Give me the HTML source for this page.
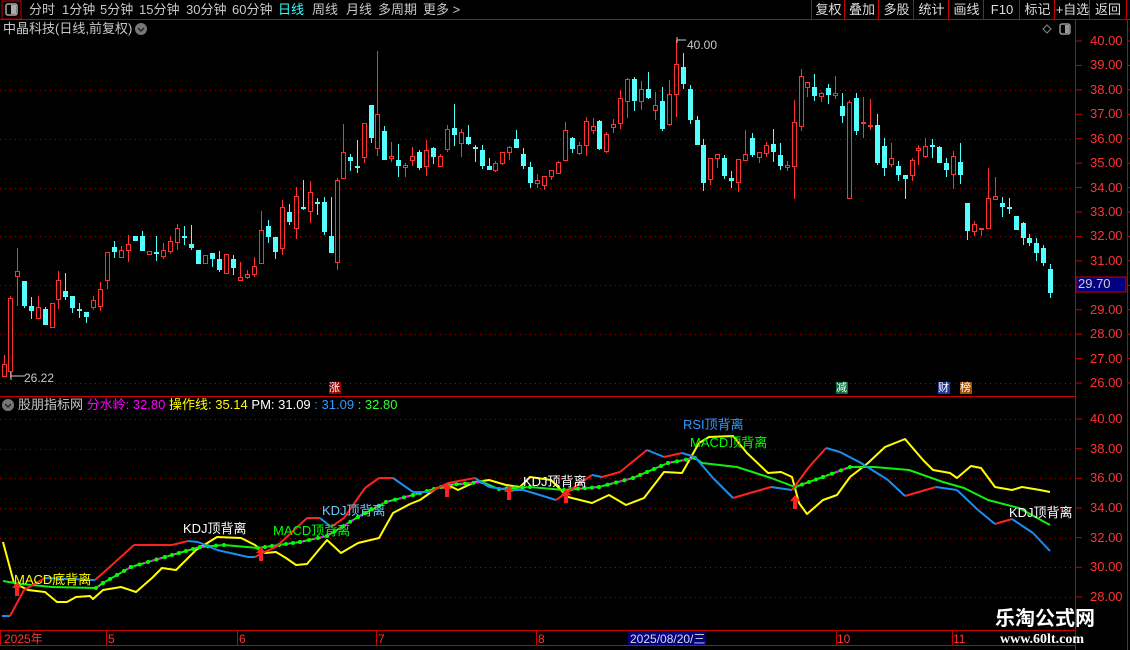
<!DOCTYPE html>
<html><head><meta charset="utf-8"><style>
*{margin:0;padding:0}
body{width:1130px;height:650px;background:#000;overflow:hidden;position:relative;font-family:"Liberation Sans","Noto Sans CJK SC",sans-serif;font-size:12px;color:#c8c8c8}
.t{position:absolute;white-space:nowrap;line-height:14px}
.m{position:absolute;top:3px;font-size:13px;line-height:14px;white-space:nowrap;color:#c8c8c8}
.btn{position:absolute;top:0;height:19px;border-left:1px solid #c00;color:#ddd;font-size:13px;line-height:19px;text-align:center}
svg{position:absolute;left:0;top:0}
</style></head><body>
<svg id="s" width="1130" height="650" xmlns="http://www.w3.org/2000/svg">
<rect x="2" y="1" width="19" height="18" fill="none" stroke="#c00"/>
<rect x="6" y="4" width="11" height="11" rx="2" fill="none" stroke="#aaa" stroke-width="1.5"/><rect x="11" y="5" width="5" height="9" fill="#aaa"/>
<line x1="0" y1="19.5" x2="1130" y2="19.5" stroke="#c00"/>
<line x1="0" y1="396.5" x2="1075" y2="396.5" stroke="#c00"/>
<line x1="0" y1="630.5" x2="1075" y2="630.5" stroke="#c00"/>
<line x1="0" y1="645.5" x2="1075" y2="645.5" stroke="#c00"/>
<line x1="1075.5" y1="20" x2="1075.5" y2="650" stroke="#c00"/>
<line x1="1127.5" y1="20" x2="1127.5" y2="650" stroke="#c00"/>
<g id="grid" stroke="#a00" stroke-dasharray="1,4"></g>
<g id="ax" stroke="#c00"></g>
<g id="cd"></g>
<g id="ln" fill="none" stroke-width="2" stroke-linejoin="round"></g>
<circle cx="141" cy="29" r="6" fill="#777"/><path d="M138 28l3 3 3-3" stroke="#222" stroke-width="1.5" fill="none"/>
<circle cx="8" cy="405" r="6" fill="#777"/><path d="M5 404l3 3 3-3" stroke="#222" stroke-width="1.5" fill="none"/>
<path d="M1047 25l4 4-4 4-4-4z" fill="none" stroke="#888"/>
<rect x="1060" y="24" width="10" height="10" rx="2" fill="none" stroke="#999" stroke-width="1.5"/><rect x="1065" y="25" width="4" height="8" fill="#999"/>
<rect x="1076" y="277" width="50" height="15" fill="#000080" stroke="#c00"/>
<rect x="628" y="631" width="78" height="14" fill="#000080"/>
<rect x="329" y="382" width="12" height="12" fill="#900"/>
<rect x="836" y="382" width="12" height="12" fill="#0a6a3a"/>
<rect x="938" y="382" width="12" height="12" fill="#1a3aa0"/>
<rect x="960" y="382" width="12" height="12" fill="#a05000"/>
<path d="M11 372v8M11 376h14" stroke="#ccc"/>
<path d="M677 37v6M677 40h9" stroke="#ccc"/>
</svg>
<div class="m" style="left:29px">分时</div><div class="m" style="left:62px">1分钟</div><div class="m" style="left:100px">5分钟</div><div class="m" style="left:139px">15分钟</div><div class="m" style="left:186px">30分钟</div><div class="m" style="left:232px">60分钟</div><div class="m" style="left:278px;color:#3ff">日线</div><div class="m" style="left:312px">周线</div><div class="m" style="left:346px">月线</div><div class="m" style="left:378px">多周期</div><div class="m" style="left:423px">更多 &gt;</div>
<div class="btn" style="left:811px;width:33px">复权</div><div class="btn" style="left:844px;width:34px">叠加</div><div class="btn" style="left:878px;width:35px">多股</div><div class="btn" style="left:913px;width:35px">统计</div><div class="btn" style="left:948px;width:35px">画线</div><div class="btn" style="left:983px;width:36px">F10</div><div class="btn" style="left:1019px;width:35px">标记</div><div class="btn" style="left:1054px;width:35px">+自选</div><div class="btn" style="left:1089px;width:36px;border-right:1px solid #c00">返回</div>
<div class="t" style="left:3px;top:22px;font-size:13px">中晶科技(日线,前复权)</div>
<div class="t" style="left:687px;top:38px">40.00</div>
<div class="t" style="left:24px;top:371px">26.22</div>
<div class="t" style="left:1078px;top:277px;color:#ccc;font-size:13px">29.70</div>
<div class="t" style="left:329px;top:381px;color:#fff;font-size:11px">涨</div>
<div class="t" style="left:836px;top:381px;color:#fff;font-size:11px">减</div>
<div class="t" style="left:938px;top:381px;color:#fff;font-size:11px">财</div>
<div class="t" style="left:960px;top:381px;color:#fff;font-size:11px">榜</div>
<div class="t" style="left:18px;top:398px;font-size:13px">股朋指标网 <span style="color:#f0f">分水岭: 32.80</span> <span style="color:#ff0">操作线: 35.14</span> <span style="color:#fff">PM: 31.09</span> <span style="color:#39f">: 31.09</span> <span style="color:#3f3">: 32.80</span></div>
<div class="t" style="left:14px;top:573px;color:#ff0;font-size:13px">MACD底背离</div>
<div class="t" style="left:183px;top:522px;color:#fff;font-size:13px">KDJ顶背离</div>
<div class="t" style="left:273px;top:524px;color:#0f0;font-size:13px">MACD顶背离</div>
<div class="t" style="left:322px;top:504px;color:#6cf;font-size:13px">KDJ顶背离</div>
<div class="t" style="left:523px;top:475px;color:#fff;font-size:13px">KDJ顶背离</div>
<div class="t" style="left:683px;top:418px;color:#39f;font-size:13px">RSI顶背离</div>
<div class="t" style="left:690px;top:436px;color:#0f0;font-size:13px">MACD顶背离</div>
<div class="t" style="left:1009px;top:506px;color:#fff;font-size:13px">KDJ顶背离</div>
<div class="t" style="left:4px;top:632px;color:#f33">2025年</div>
<div class="t" style="left:108px;top:632px;color:#f33">5</div>
<div class="t" style="left:239px;top:632px;color:#f33">6</div>
<div class="t" style="left:378px;top:632px;color:#f33">7</div>
<div class="t" style="left:538px;top:632px;color:#f33">8</div>
<div class="t" style="left:630px;top:632px;color:#ddd">2025/08/20/三</div>
<div class="t" style="left:837px;top:632px;color:#f33">10</div>
<div class="t" style="left:953px;top:632px;color:#f33">11</div>
<div class="t" style="left:995px;top:607px;color:#fff;font-size:20px;font-weight:bold;line-height:24px">乐淘公式网</div>
<div class="t" style="left:1000px;top:633px;color:#fff;font-size:14px;font-weight:bold;font-family:'Liberation Serif',serif">www.60lt.com</div>
<div id="lab"></div>
<script>
var N="http://www.w3.org/2000/svg";
function el(p,t,a){var e=document.createElementNS(N,t);for(var k in a)e.setAttribute(k,a[k]);p.appendChild(e);return e}
var g=document.getElementById('grid'),ax=document.getElementById('ax'),lab=document.getElementById('lab');
[90,139,188,236,285,334,383,419,449,478,508,538,567,597].forEach(function(y){el(g,'line',{x1:0,x2:1075,y1:y+.5,y2:y+.5})});
var h='';
for(var p=40;p>=26;p--){var y=41+(40-p)*24.43;el(ax,'line',{x1:1075,x2:1082,y1:y,y2:y});el(ax,'line',{x1:1127,x2:1130,y1:y,y2:y});if(p!=30)h+='<div class="t" style="left:1090px;top:'+(y-7)+'px;color:#f33;font-size:13px">'+p+'.00</div>';}
for(var p=40;p>=28;p-=2){var y=419+(40-p)*14.83;el(ax,'line',{x1:1075,x2:1082,y1:y,y2:y});h+='<div class="t" style="left:1090px;top:'+(y-7)+'px;color:#f33;font-size:13px">'+p+'.00</div>';}
[0,106,237,376,536,836,952].forEach(function(x){el(ax,'line',{x1:x+.5,x2:x+.5,y1:631,y2:645})});
lab.innerHTML=h;
var C=[[4,355,364,376,376,1],[10,296,298,371,378,1],[17,248,271,276,306,1],[24,281,281,306,308,0],[31,297,306,311,319,0],[38,296,307,318,319,1],[45,307,309,325,325,0],[52,303,303,327,327,1],[58,271,280,299,309,1],[65,273,291,297,300,0],[72,296,296,308,313,0],[79,303,309,310,318,0],[86,312,312,317,323,0],[93,296,300,307,310,1],[100,282,289,306,311,1],[107,252,252,280,289,1],[114,241,247,252,258,0],[121,246,250,257,257,1],[128,235,244,250,262,1],[135,236,236,241,241,0],[142,231,236,251,251,0],[149,251,251,254,254,1],[156,236,252,253,261,0],[163,243,250,256,259,1],[170,236,241,251,254,1],[177,224,228,242,250,1],[184,226,236,238,245,0],[191,225,244,248,250,0],[198,250,250,264,264,0],[205,255,255,263,263,1],[212,253,253,259,267,0],[219,251,259,270,272,0],[226,254,254,273,273,1],[233,255,259,268,275,0],[240,262,277,280,280,1],[247,270,274,277,279,1],[254,257,266,274,277,1],[261,211,230,263,264,1],[268,220,226,237,243,0],[275,237,237,252,259,0],[282,200,207,248,255,1],[289,204,212,222,225,0],[296,187,196,228,239,1],[303,180,207,208,210,0],[310,181,192,211,223,1],[317,198,202,203,215,0],[324,197,202,232,235,0],[331,197,236,253,253,0],[337,178,180,262,270,1],[343,124,152,178,178,1],[350,154,157,161,171,0],[357,140,166,167,173,0],[364,123,123,157,163,1],[371,105,105,138,143,0],[377,51,114,148,156,1],[384,126,131,160,160,0],[391,142,156,158,162,1],[398,144,160,166,177,0],[405,163,165,167,177,1],[412,147,156,160,166,1],[419,150,152,168,170,0],[426,140,150,166,176,1],[433,147,148,157,164,0],[440,154,156,166,167,1],[447,125,129,149,152,1],[454,104,128,135,146,0],[461,129,132,143,157,1],[468,125,137,144,145,0],[475,145,147,148,162,0],[482,145,150,166,169,0],[489,158,166,170,170,0],[495,161,163,170,172,1],[502,152,152,163,165,1],[509,146,147,152,160,1],[516,130,139,148,148,0],[523,148,154,166,169,0],[530,162,167,183,188,0],[537,174,180,183,188,1],[544,176,176,185,190,1],[551,170,170,176,180,1],[558,161,162,173,174,1],[565,122,130,160,161,1],[572,137,138,149,153,0],[579,142,145,153,155,1],[586,117,121,145,156,1],[593,118,126,130,134,1],[599,120,121,149,150,0],[606,132,134,151,153,1],[613,119,124,127,133,1],[620,90,98,123,129,1],[627,78,79,101,118,1],[634,77,79,101,111,0],[641,81,89,101,110,1],[648,72,89,98,99,0],[655,92,105,110,120,1],[662,87,101,129,131,0],[669,80,94,124,126,1],[676,40,64,94,117,1],[683,53,67,84,89,0],[690,85,89,120,124,0],[697,116,120,145,145,0],[703,139,145,183,191,0],[710,158,158,179,185,1],[717,154,154,158,168,1],[724,155,158,176,179,0],[731,171,178,181,188,0],[738,159,159,182,192,1],[745,130,154,160,161,1],[752,133,138,155,157,0],[759,152,152,157,163,1],[766,142,145,153,157,1],[773,129,144,152,162,0],[780,143,155,166,170,0],[787,161,165,167,171,1],[794,100,122,166,199,1],[801,69,76,126,131,1],[807,82,82,87,97,1],[814,74,87,96,101,0],[821,92,93,96,102,1],[828,84,88,95,104,0],[835,76,93,95,99,1],[842,93,106,116,123,0],[849,100,102,198,198,1],[856,93,98,131,135,0],[863,97,122,123,138,1],[870,99,125,126,130,1],[877,114,125,163,165,0],[884,138,146,168,176,0],[891,143,158,164,167,1],[898,161,166,175,181,0],[905,175,175,179,199,0],[912,158,160,175,181,1],[918,145,148,150,165,1],[925,138,146,156,158,1],[932,139,145,146,158,0],[939,146,147,163,163,0],[946,158,163,170,177,0],[953,151,156,174,189,1],[960,143,162,175,184,0],[967,203,203,231,240,0],[974,221,224,231,236,1],[981,228,228,229,236,1],[988,168,198,228,228,1],[995,177,196,199,199,1],[1002,197,203,207,217,0],[1009,198,207,209,214,0],[1016,216,216,230,230,0],[1023,222,223,238,245,0],[1029,234,238,243,246,0],[1036,238,243,253,261,0],[1043,245,248,263,266,0],[1050,264,269,293,298,0]];
var cd=document.getElementById('cd');
C.forEach(function(c){var x=c[0],col=c[5]?'#ff3232':'#54ffff';
 el(cd,'line',{x1:x+.5,x2:x+.5,y1:c[1],y2:c[4],stroke:col});
 var hh=Math.max(c[3]-c[2],1);
 if(c[5])el(cd,'rect',{x:x-1.5,y:c[2]+.5,width:4,height:hh,fill:'#000',stroke:col});
 else el(cd,'rect',{x:x-2,y:c[2],width:5,height:hh+ (hh<2?1:0),fill:col});
});
var ln=document.getElementById('ln');
function pl(pts,col,extra){var a={points:pts.map(function(p){return p.join(',')}).join(' '),stroke:col};for(var k in extra)a[k]=extra[k];return el(ln,'polyline',a)}
var Y=[[3,542],[14,583],[28,590],[45,592],[57,602],[67,602],[76,597],[90,596],[93,599],[103,590],[121,587],[136,592],[152,578],[162,568],[176,570],[196,550],[217,537],[241,538],[255,545],[265,553],[276,552],[286,558],[296,565],[307,564],[327,540],[341,553],[358,543],[379,538],[393,513],[410,504],[420,500],[437,488],[448,485],[458,490],[475,482],[489,480],[506,485],[520,487],[530,477],[551,480],[568,497],[592,503],[609,495],[626,505],[644,498],[664,472],[682,473],[699,443],[709,437],[733,436],[747,453],[768,473],[781,472],[792,477],[799,503],[807,514],[823,500],[837,495],[850,477],[868,463],[885,447],[905,439],[923,460],[933,470],[950,473],[957,478],[971,466],[981,468],[995,487],[1012,490],[1022,487],[1040,490],[1050,492]];
pl(Y,'#ff0');
var G=[[3,581],[21,584],[52,587],[96,588],[103,583],[131,567],[165,557],[200,547],[224,545],[258,548],[300,542],[327,536],[358,517],[386,502],[413,495],[448,485],[482,482],[499,489],[530,487],[564,490],[599,487],[633,478],[668,463],[695,458],[702,463],[737,467],[771,478],[795,487],[823,477],[850,467],[874,467],[909,470],[943,482],[964,488],[988,500],[1019,508],[1050,525]];
pl(G,'#1e1');
for(var i=1;i<G.length;i++){if(G[i][1]<G[i-1][1]){pl([G[i-1],G[i]],'#f0f',{'stroke-dasharray':'3,4'});var n=Math.floor((G[i][0]-G[i-1][0])/7);for(var j=0;j<=n;j++){var t=n?j/n:0;el(ln,'circle',{cx:G[i-1][0]+t*(G[i][0]-G[i-1][0]),cy:G[i-1][1]+t*(G[i][1]-G[i-1][1]),r:2,fill:'#0f0',stroke:'none'})}}}
var R=[[2,616],[10,616],[24,590],[45,578],[95,580],[103,573],[134,545],[152,545],[172,545],[188,541],[198,542],[217,550],[248,557],[255,557],[262,553],[276,547],[307,518],[320,518],[331,527],[344,518],[365,488],[379,478],[393,478],[413,492],[430,492],[448,483],[475,478],[489,487],[510,490],[523,490],[530,492],[556,500],[592,475],[602,477],[620,472],[647,450],[664,457],[682,453],[695,457],[713,478],[733,498],[750,493],[771,487],[792,490],[809,467],[826,448],[840,452],[861,463],[888,480],[905,496],[936,487],[957,490],[978,510],[995,524],[1012,519],[1033,533],[1050,551]];
var prev='#1a8ff0';
for(var i=1;i<R.length;i++){var c=R[i][1]<R[i-1][1]?'#f22':(R[i][1]==R[i-1][1]?prev:'#1a8ff0');prev=c;pl([R[i-1],R[i]],c)}
[[17,590],[261,555],[447,491],[509,494],[566,497],[795,503]].forEach(function(a){var x=a[0],y=a[1];el(ln,'path',{d:'M'+x+' '+(y-8)+'l-5 6h3v8h4v-8h3z',fill:'#f22',stroke:'none'})});
</script>
</body></html>
